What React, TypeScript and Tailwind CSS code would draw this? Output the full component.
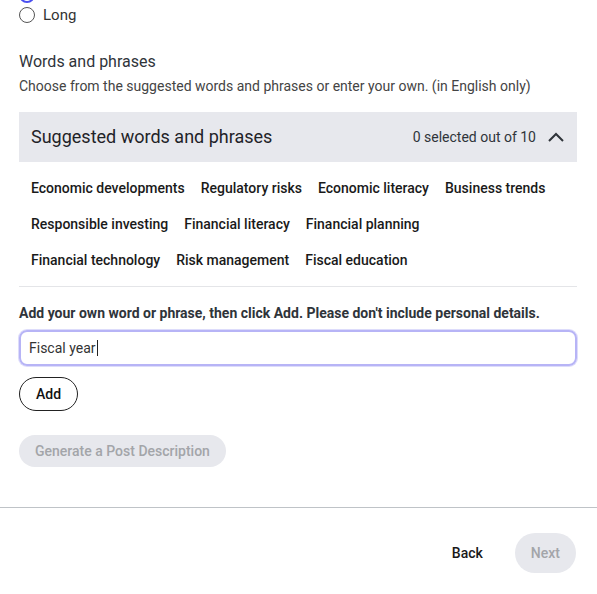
import { useState } from 'react';

const suggestions = [
  'Economic developments',
  'Regulatory risks',
  'Economic literacy',
  'Business trends',
  'Responsible investing',
  'Financial literacy',
  'Financial planning',
  'Financial technology',
  'Risk management',
  'Fiscal education',
];

function Radio({ label, checked }: { label?: string; checked?: boolean }) {
  return (
    <label className="flex h-5 items-center gap-2 text-[15px] text-[#333]">
      <span
        className={
          checked
            ? 'flex h-4 w-4 items-center justify-center rounded-full border-2 border-[#4a4ff0] bg-white'
            : 'h-4 w-4 rounded-full border border-[#555] bg-white'
        }
      >
        {checked && <span className="h-[7px] w-[7px] rounded-full bg-[#4a4ff0]" />}
      </span>
      {label && <span>{label}</span>}
    </label>
  );
}

export default function App() {
  const [open, setOpen] = useState(true);

  return (
    <div className="min-h-screen bg-white font-['Roboto',sans-serif] text-[#1f1f1f]">
      <div className="pl-[19px] pr-[20px]">
        <div className="-mt-[15px] flex flex-col">
          <Radio checked />
          <Radio label="Long" />
        </div>

        <h2 className="mt-[25px] text-base leading-6 text-[#2f343a]">Words and phrases</h2>
        <p className="mt-[2px] text-sm leading-5 text-[#444]">
          Choose from the suggested words and phrases or enter your own. (in English only)
        </p>

        <button
          onClick={() => setOpen(!open)}
          className="mt-4 flex h-[50px] w-full items-center justify-between bg-[#e7e8ed] pl-3 pr-[13px]"
        >
          <span className="text-lg text-[#1f2328]">Suggested words and phrases</span>
          <span className="flex items-center gap-3 text-sm text-[#2f343a]">
            0 selected out of 10
            <svg width="16" height="10" viewBox="0 0 16 10" fill="none">
              <path d="M1 9L8 2L15 9" stroke="#2f343a" strokeWidth="2" />
            </svg>
          </span>
        </button>

        {open && (
          <div className="flex flex-wrap gap-x-4 border-b border-[#e4e5e8] pl-3 pr-4 pt-2 pb-2">
            {suggestions.map((s) => (
              <button key={s} className="flex h-9 items-center text-sm font-medium text-[#1a1a1a]">
                {s}
              </button>
            ))}
          </div>
        )}

        <p className="mt-4 text-sm font-bold leading-5 text-[#2f343a]">
          Add your own word or phrase, then click Add. Please don't include personal details.
        </p>
        <div className="mt-[7px] flex h-9 items-center rounded-lg border-2 border-[#b7b4f6] pl-[8px] text-sm text-[#333] shadow-[0_0_0_1px_#dddcfb]">
          Fiscal year
          <span className="ml-px h-4 w-px bg-[#222]" />
        </div>
        <button className="mt-[11px] h-[34px] rounded-full border border-[#222] px-4 text-sm font-medium text-[#111]">
          Add
        </button>
        <div>
          <button className="mt-6 h-8 rounded-full bg-[#e7e8ed] px-4 text-sm font-medium text-[#a3a5a9]">
            Generate a Post Description
          </button>
        </div>
      </div>

      <div className="mt-10 flex justify-end gap-4 border-t border-[#bfc3c7] pt-[25px] pr-[21px]">
        <button className="h-10 px-4 text-sm font-medium text-[#1a1a1a]">Back</button>
        <button className="h-10 rounded-full bg-[#e7e8ed] px-4 text-sm font-medium text-[#a3a5a9]">Next</button>
      </div>
    </div>
  );
}
